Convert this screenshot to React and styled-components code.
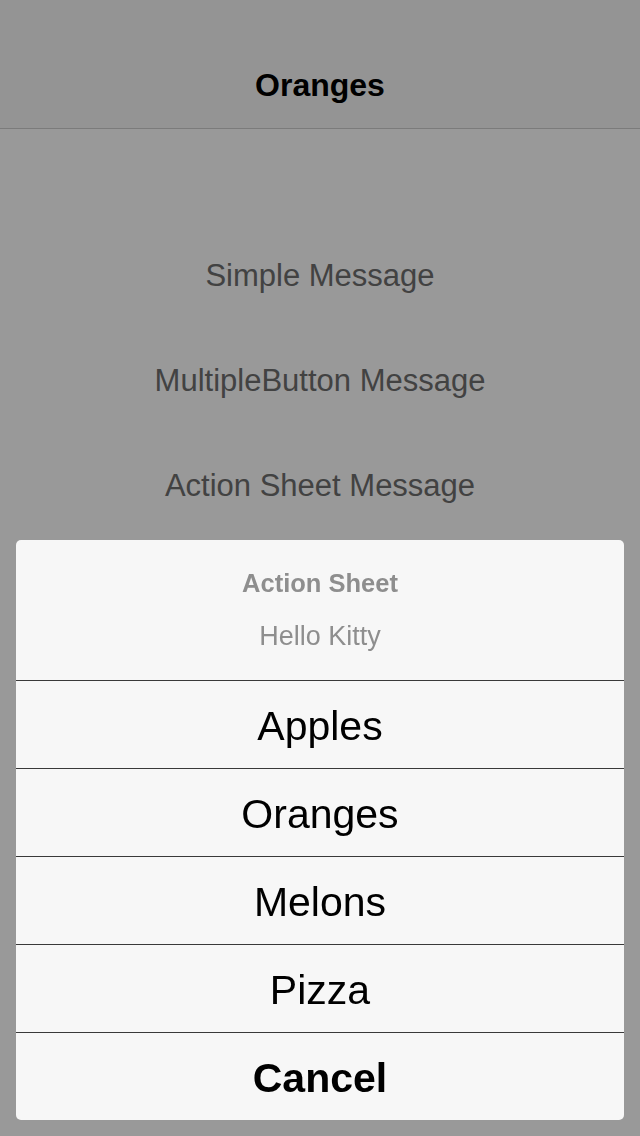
import styled, { createGlobalStyle } from "styled-components";

const GlobalStyle = createGlobalStyle`
  html, body {
    margin: 0;
    padding: 0;
    background: #ffffff;
    font-family: "Liberation Sans", Arial, sans-serif;
  }
  #root {
    min-height: 100vh;
  }
`;

const MESSAGES = ["Simple Message", "MultipleButton Message", "Action Sheet Message"];
const OPTIONS = ["Apples", "Oranges", "Melons", "Pizza"];

const App = () => {
  return (
    <Page>
      <GlobalStyle />
      <NavBar>
        <NavTitle>Oranges</NavTitle>
      </NavBar>
      <List>
        {MESSAGES.map((m) => (
          <MessageButton key={m}>{m}</MessageButton>
        ))}
      </List>

      {/* dimmed backdrop + the sheet on top */}
      <Backdrop />
      <Sheet>
        <SheetHeader>
          <SheetTitle>Action Sheet</SheetTitle>
          <SheetMessage>Hello Kitty</SheetMessage>
        </SheetHeader>
        {OPTIONS.map((o) => (
          <SheetRow key={o}>{o}</SheetRow>
        ))}
        <SheetRow $bold>Cancel</SheetRow>
      </Sheet>
    </Page>
  );
};
export default App;

const Page = styled.div`
  min-height: 100vh;
  background: #ffffff;
`;

const NavBar = styled.header`
  height: 88px;
  padding-top: 40px;
  display: flex;
  align-items: center;
  justify-content: center;
  background: #f7f7f7;
  border-bottom: 1px solid #cdcdcd;
`;

const NavTitle = styled.h1`
  margin: 0;
  padding-top: 2px;
  font-size: 32px;
  font-weight: 700;
  color: #000;
`;

const List = styled.div`
  padding-top: 94px;
  display: flex;
  flex-direction: column;
`;

const MessageButton = styled.div`
  height: 105px;
  display: flex;
  align-items: center;
  justify-content: center;
  font-size: 31px;
  color: #6e6e6e;
`;

const Backdrop = styled.div`
  position: fixed;
  inset: 0;
  background: rgba(0, 0, 0, 0.4);
`;

const Sheet = styled.div`
  position: fixed;
  left: 16px;
  right: 16px;
  bottom: 16px;
  background: #f7f7f7;
  border-radius: 5px;
  overflow: hidden;
  display: flex;
  flex-direction: column;
`;

const SheetHeader = styled.div`
  height: 140px;
  box-sizing: border-box;
  padding-top: 28px;
  display: flex;
  flex-direction: column;
  align-items: center;
  gap: 22px;
  color: #8e8e8e;
`;

const SheetTitle = styled.div`
  font-size: 25.5px;
  font-weight: 700;
  line-height: 30px;
`;

const SheetMessage = styled.div`
  font-size: 27px;
  line-height: 32px;
`;

const SheetRow = styled.div`
  height: 88px;
  box-sizing: border-box;
  padding-top: 3px;
  border-top: 1px solid #3a3a3a;
  display: flex;
  align-items: center;
  justify-content: center;
  font-size: 41px;
  font-weight: ${(props) => (props.$bold ? 700 : 400)};
  color: #000;
`;
